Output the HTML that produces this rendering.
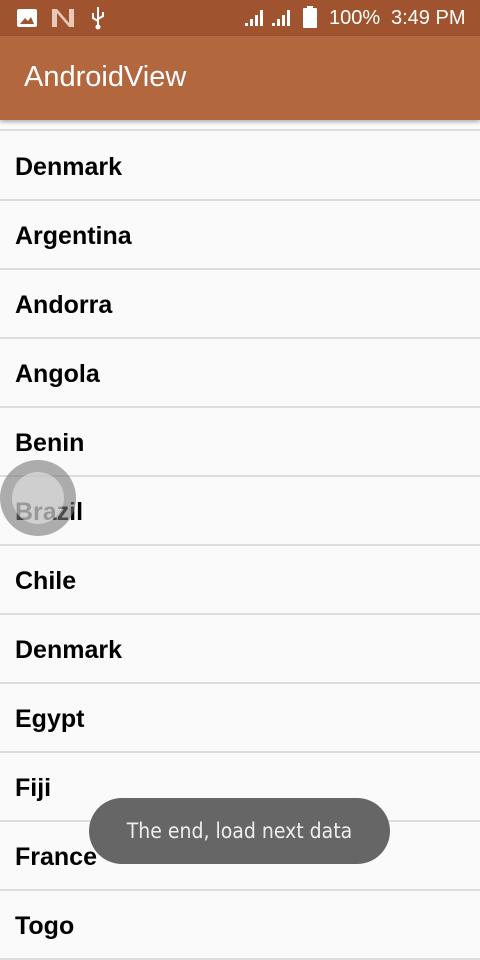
<!DOCTYPE html>
<html><head><style>
body{margin:0;width:480px;height:960px;overflow:hidden;background:#fafafa;font-family:"Liberation Sans",sans-serif;position:relative}
.sb{position:absolute;top:0;left:0;width:480px;height:36px;background:#a0532f;color:#fff;font-size:20px}
.tb{position:absolute;top:36px;left:0;width:480px;height:84px;background:#b2673f;box-shadow:0 2px 4px rgba(0,0,0,.3);z-index:2}
.tb span{position:absolute;left:24px;top:25px;color:#fff;font-size:29px}
.row{position:absolute;left:0;width:480px;height:69px;border-bottom:2px solid #ddd;box-sizing:border-box}
.row span{position:absolute;left:15px;top:21px;font-size:25px;font-weight:bold;color:#000}
.toast{position:absolute;left:89px;top:798px;width:301px;height:66px;border-radius:33px;background:#666;color:#eee;font-size:21px;text-align:center;line-height:66px;font-family:"DejaVu Sans Condensed","Liberation Sans Narrow",sans-serif}
.touch{position:absolute;left:0;top:460px;width:76px;height:76px;border-radius:50%;background:rgba(120,120,120,.6)}
.touch div{position:absolute;left:12px;top:12px;width:52px;height:52px;border-radius:50%;background:rgba(250,250,250,.45)}
</style></head><body>
<div class="sb">
<svg style="position:absolute;left:17px;top:9px" width="20" height="18"><rect width="20" height="18" rx="2" fill="#fff"/><path d="M3 15 L8 9 L11 12 L14 8 L17 15Z" fill="#a0532f"/></svg>
<svg style="position:absolute;left:52px;top:9px" width="22" height="18"><path d="M0 0h5l12 14V0h5v18h-5L5 4v14H0z" fill="#e8c8b8"/></svg>
<svg style="position:absolute;left:90px;top:6px" width="16" height="24"><path d="M8 1v20M3 7v5l5 3M13 6v4l-5 3" stroke="#fff" stroke-width="2" fill="none"/><circle cx="8" cy="21" r="2.5" fill="#fff"/></svg>
<svg style="position:absolute;left:245px;top:10px" width="50" height="16"><path d="M0 16h3v-3H0zM5 16h3V9H5zM10 16h3V5h-3zM15 16h3V0h-3zM27 16h3v-3h-3zM32 16h3V9h-3zM37 16h3V5h-3zM42 16h3V0h-3z" fill="#fff"/></svg>
<svg style="position:absolute;left:303px;top:6px" width="14" height="22"><rect x="4" y="0" width="6" height="3" fill="#fff"/><rect x="0" y="2" width="14" height="20" rx="1" fill="#fff"/></svg>
<span style="position:absolute;left:329px;top:7px">100%</span>
<span style="position:absolute;left:391px;top:7px">3:49 PM</span>
</div>
<div class="tb"><span>AndroidView</span></div>
<div class="row" style="top:62px"></div>
<div class="row" style="top:132px"><span>Denmark</span></div>
<div class="row" style="top:201px"><span>Argentina</span></div>
<div class="row" style="top:270px"><span>Andorra</span></div>
<div class="row" style="top:339px"><span>Angola</span></div>
<div class="row" style="top:408px"><span>Benin</span></div>
<div class="row" style="top:477px"><span>Brazil</span></div>
<div class="row" style="top:546px"><span>Chile</span></div>
<div class="row" style="top:615px"><span>Denmark</span></div>
<div class="row" style="top:684px"><span>Egypt</span></div>
<div class="row" style="top:753px"><span>Fiji</span></div>
<div class="row" style="top:822px"><span>France</span></div>
<div class="row" style="top:891px"><span>Togo</span></div>
<div class="touch"><div></div></div>
<div class="toast">The end, load next data</div>
</body></html>
